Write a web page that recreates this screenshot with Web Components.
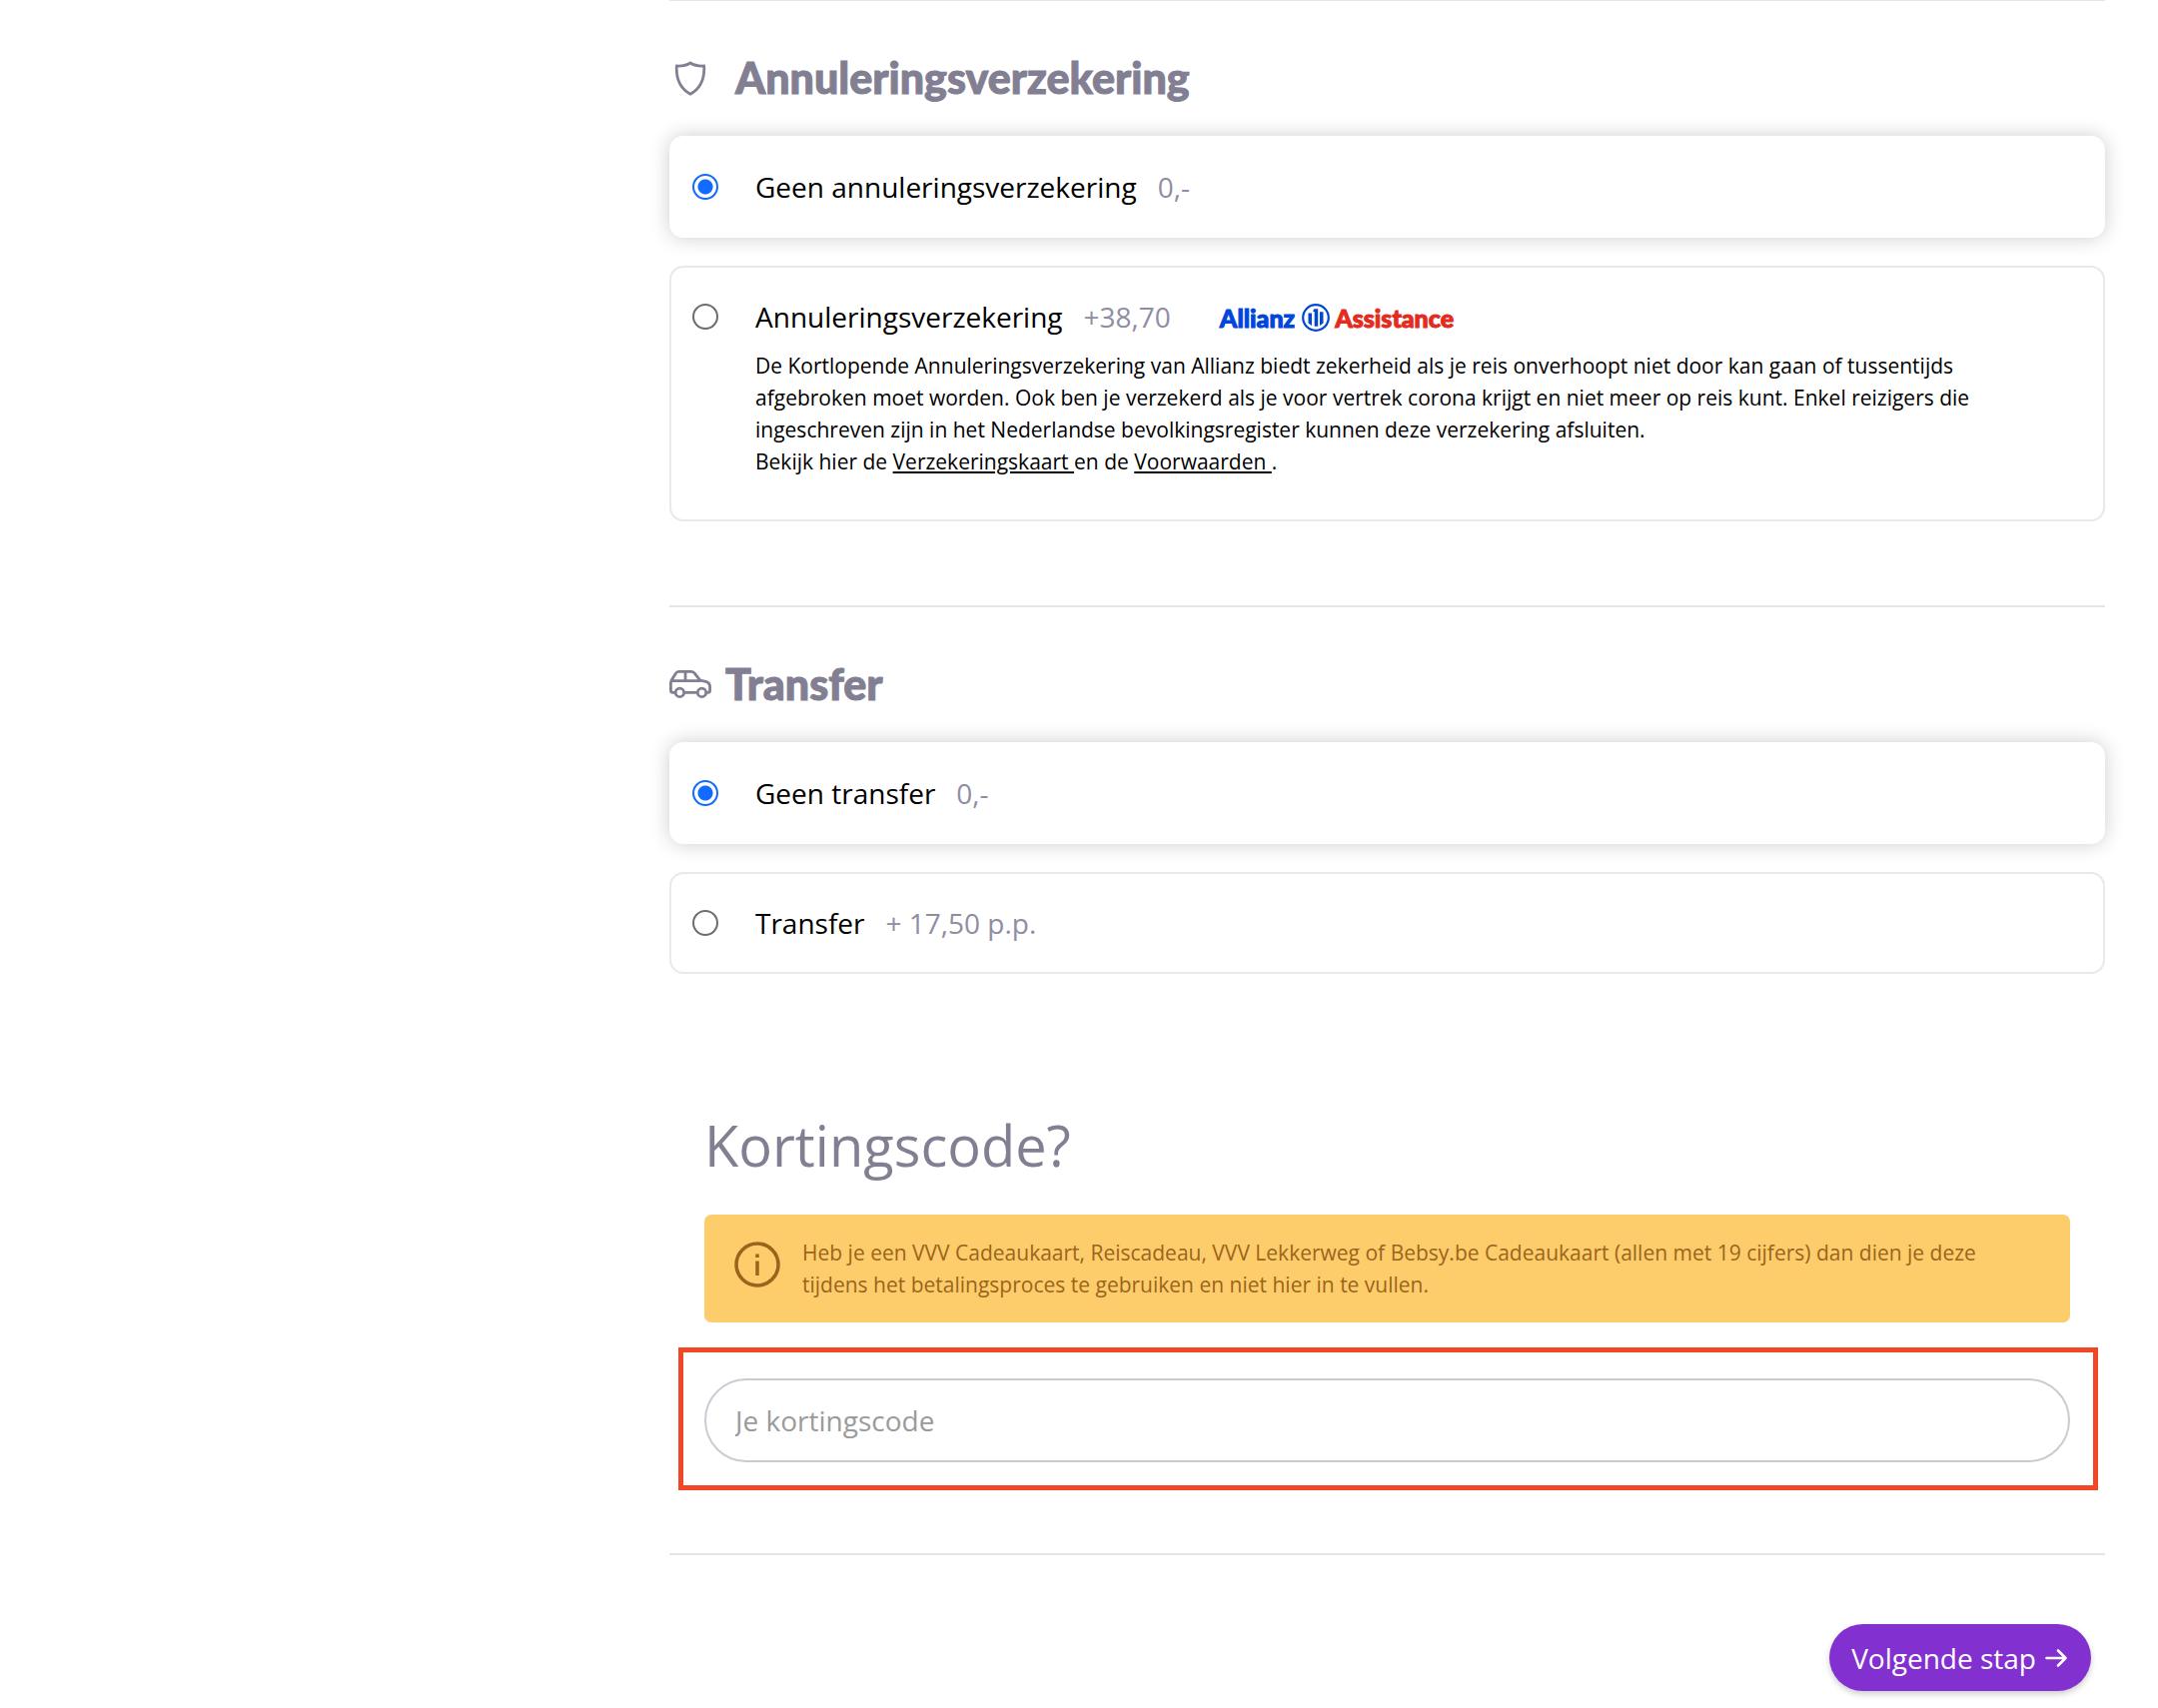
<!DOCTYPE html>
<html lang="nl">
<head>
<meta charset="utf-8">
<meta name="viewport" content="width=device-width, initial-scale=1">
<title>Boeking</title>
<style>
  body { margin: 0; background: #fff; color: #000; font-family: "Open Sans", "Noto Sans", sans-serif; font-size: 21px; line-height: 32px; }
  a { color: inherit; text-decoration: underline; text-decoration-thickness: 2px; text-underline-offset: 2px; }
</style>
</head>
<body>
<booking-page>
  <booking-section>
    <shield-icon slot="icon"></shield-icon>
    <span slot="title">Annuleringsverzekering</span>
    <option-card checked>
      Geen annuleringsverzekering
      <span slot="price">0,-</span>
    </option-card>
    <option-card>
      Annuleringsverzekering
      <span slot="price">+38,70</span>
      <allianz-logo slot="logo"></allianz-logo>
      <div slot="details">De Kortlopende Annuleringsverzekering van Allianz biedt zekerheid als je reis onverhoopt niet door kan gaan of tussentijds afgebroken moet worden. Ook ben je verzekerd als je voor vertrek corona krijgt en niet meer op reis kunt. Enkel reizigers die ingeschreven zijn in het Nederlandse bevolkingsregister kunnen deze verzekering afsluiten.<br>Bekijk hier de <a href="#verzekeringskaart">Verzekeringskaart&nbsp;</a>en de <a href="#voorwaarden">Voorwaarden&nbsp;</a>.</div>
    </option-card>
  </booking-section>
  <booking-section compact>
    <car-icon slot="icon"></car-icon>
    <span slot="title">Transfer</span>
    <option-card checked>
      Geen transfer
      <span slot="price">0,-</span>
    </option-card>
    <option-card>
      Transfer
      <span slot="price">+ 17,50 p.p.</span>
    </option-card>
  </booking-section>
  <discount-code>
    <span slot="title">Kortingscode?</span>
    <info-alert>Heb je een VVV Cadeaukaart, Reiscadeau, VVV Lekkerweg of Bebsy.be Cadeaukaart (allen met 19 cijfers) dan dien je deze tijdens het betalingsproces te gebruiken en niet hier in te vullen.</info-alert>
  </discount-code>
  <next-step>Volgende stap</next-step>
</booking-page>

<script>
const define = (name, html, setup) => {
  const template = document.createElement('template');
  template.innerHTML = html;
  customElements.define(name, class extends HTMLElement {
    constructor() {
      super();
      this.attachShadow({ mode: 'open' }).append(template.content.cloneNode(true));
    }
    connectedCallback() { if (setup) setup(this, this.shadowRoot); }
  });
};

define('shield-icon', `
  <style>:host { display: block; width: 42px; } svg { display: block; margin: auto; }</style>
  <svg width="32" height="36" viewBox="0 0 32 36" fill="none" stroke="#827f93" stroke-width="2.8" stroke-linejoin="round" aria-hidden="true">
    <path d="M16 3C12.600 5.300 7.500 6.300 2.300 6C1.600 18.500 5.500 28.500 16 34.200C26.500 28.500 30.400 18.500 29.700 6C24.500 6.300 19.400 5.300 16 3Z"/>
  </svg>`);

define('car-icon', `
  <style>:host { display: block; } svg { display: block; }</style>
  <svg width="42" height="28" viewBox="0 0 42 28" fill="none" stroke="#827f93" stroke-width="2.8" stroke-linejoin="round" stroke-linecap="round" aria-hidden="true">
    <path d="M5.500 22.400H3.400C2.100 22.400 1.400 21.500 1.400 20.300V13C1.400 11.500 1.700 10.700 2.300 9.700L6.200 3.400C7 2 8 1.400 9.600 1.400H21.500C23.200 1.400 24.300 1.900 25.300 3.100L30.800 10.200L36.400 11.300C39.200 12 40.600 13.800 40.600 16.600V20.300C40.600 21.600 39.900 22.400 38.600 22.400H37.300M15.200 22.400H27.700M1.900 10.700H30.500M16 1.400V10.700"/>
    <circle cx="10.400" cy="22.400" r="4.200"/><circle cx="32.500" cy="22.400" r="4.200"/>
  </svg>`);

define('allianz-logo', `
  <style>
    :host { display: flex; align-items: center; gap: 5px; padding-top: 2px; font: 900 25px/32px Lato, "Open Sans", sans-serif; color: #0046d8; -webkit-text-stroke: 1px currentColor; }
    svg { display: block; }
    span { margin-right: 2px; }
    b { font-weight: inherit; color: #e32c1e; }
  </style>
  <span>Allianz</span>
  <svg width="28" height="28" viewBox="0 0 28 28" aria-hidden="true">
    <circle cx="14" cy="14" r="12.800" fill="none" stroke="#0046d8" stroke-width="2.200"/>
    <path fill="#0046d8" d="M6.500 9.500H10V22L6.500 19.500ZM11.300 7L12.500 5.300H16.200V22.800H12.700V8H11.300ZM18 8.200H21.500V19.500L18 22Z"/>
  </svg>
  <b>Assistance</b>`);

define('option-card', `
  <style>
    :host { display: block; border: 2px solid #e8e8ee; border-radius: 14px; background: #fff; padding: 32px 120px 32px 21px; }
    :host([checked]) { border-color: #fff; box-shadow: 0 0 20px rgba(0, 0, 0, .2); }
    .row { display: flex; align-items: center; }
    label { display: flex; align-items: center; font-size: 28px; line-height: 34px; cursor: pointer; }
    input { appearance: none; box-sizing: border-box; width: 26px; height: 26px; margin: 0 37px 0 0; border: 2px solid #6d6d6d; border-radius: 50%; background: #fff; }
    input:checked { border-color: #116bff; background: radial-gradient(circle, #116bff 7px, #fff 8px); }
    .price { margin-left: 21px; color: #908da3; }
    ::slotted([slot="logo"]) { margin-left: 49px; }
    ::slotted([slot="details"]) { margin: 16px 0 10px 63px; }
  </style>
  <div class="row">
    <label><input type="radio"><span><slot></slot></span><span class="price"><slot name="price"></slot></span></label>
    <slot name="logo"></slot>
  </div>
  <slot name="details"></slot>`,
  (host, root) => {
    const input = root.querySelector('input');
    input.checked = host.hasAttribute('checked');
    input.addEventListener('change', () => {
      for (const card of host.parentElement.querySelectorAll('option-card')) {
        card.toggleAttribute('checked', card === host);
        card.shadowRoot.querySelector('input').checked = card === host;
      }
    });
  });

define('booking-section', `
  <style>
    :host { display: block; border-bottom: 2px solid #e5e5e5; padding: 49px 0 84px; }
    :host([compact]) { border-bottom: 0; padding-bottom: 0; }
    h2 { display: flex; align-items: center; gap: 24px; margin: 0 0 30px; color: #827f93; font: 900 43px/56px Lato, "Open Sans", sans-serif; -webkit-text-stroke: 1px #827f93; }
    :host([compact]) h2 { gap: 14px; }
    .options { display: flex; flex-direction: column; gap: 28px; }
  </style>
  <h2><slot name="icon"></slot><slot name="title"></slot></h2>
  <div class="options" role="radiogroup"><slot></slot></div>`);

define('info-alert', `
  <style>
    :host { display: flex; align-items: flex-start; gap: 22px; padding: 22px 60px 22px 30px; border-radius: 7px; background: #fdcd6b; color: #9b641c; }
    svg { flex: none; margin-top: 5px; }
  </style>
  <svg width="46" height="46" viewBox="0 0 46 46" fill="none" stroke="#9b641c" stroke-width="3.500" aria-hidden="true">
    <circle cx="23" cy="23" r="21"/><path d="M23 19.500V34M23 12.500V16"/>
  </svg>
  <div><slot></slot></div>`);

define('discount-code', `
  <style>
    :host { display: block; margin-top: 133px; padding: 0 7px 63px 9px; border-bottom: 2px solid #e5e5e5; }
    h2 { margin: 0 26px 32px; color: #827f93; font-size: 56px; line-height: 76px; font-weight: 400; }
    ::slotted(info-alert) { margin: 0 28px 25px 26px; }
    .field { border: 5px solid #f24726; padding: 26px 23px 23px 21px; }
    input { display: block; box-sizing: border-box; width: 100%; height: 84px; padding: 0 29px; border: 2px solid #c8cdd3; border-radius: 42px; background: #fff; font: inherit; font-size: 28px; line-height: 38px; outline: 0; }
    input::placeholder { color: #9b9b9b; opacity: 1; }
  </style>
  <h2><slot name="title"></slot></h2>
  <slot></slot>
  <div class="field"><input type="text" placeholder="Je kortingscode" aria-label="Je kortingscode"></div>`);

define('next-step', `
  <style>
    :host { display: flex; justify-content: flex-end; padding: 69px 14px 14px; }
    button { display: flex; align-items: center; gap: 9px; height: 67px; padding: 0 24px 0 22px; border: 0; border-radius: 34px; background: #8230cf; color: #fff; box-shadow: 0 3px 6px rgba(0, 0, 0, .2); font: inherit; font-size: 28px; line-height: 38px; cursor: pointer; }
  </style>
  <button type="button"><span><slot></slot></span>
    <svg width="22" height="18" viewBox="0 0 22 18" fill="none" stroke="#fff" stroke-width="2.600" stroke-linecap="round" stroke-linejoin="round" aria-hidden="true"><path d="M1.500 9H20.500M13 1.500L20.500 9L13 16.500"/></svg>
  </button>`);

define('booking-page', `
  <style>
    :host { display: block; padding: 0 53px 0 670px; }
    main { display: block; border-top: 1px solid #e5e5e5; }
  </style>
  <main><slot></slot></main>`);
</script>
</body>
</html>
